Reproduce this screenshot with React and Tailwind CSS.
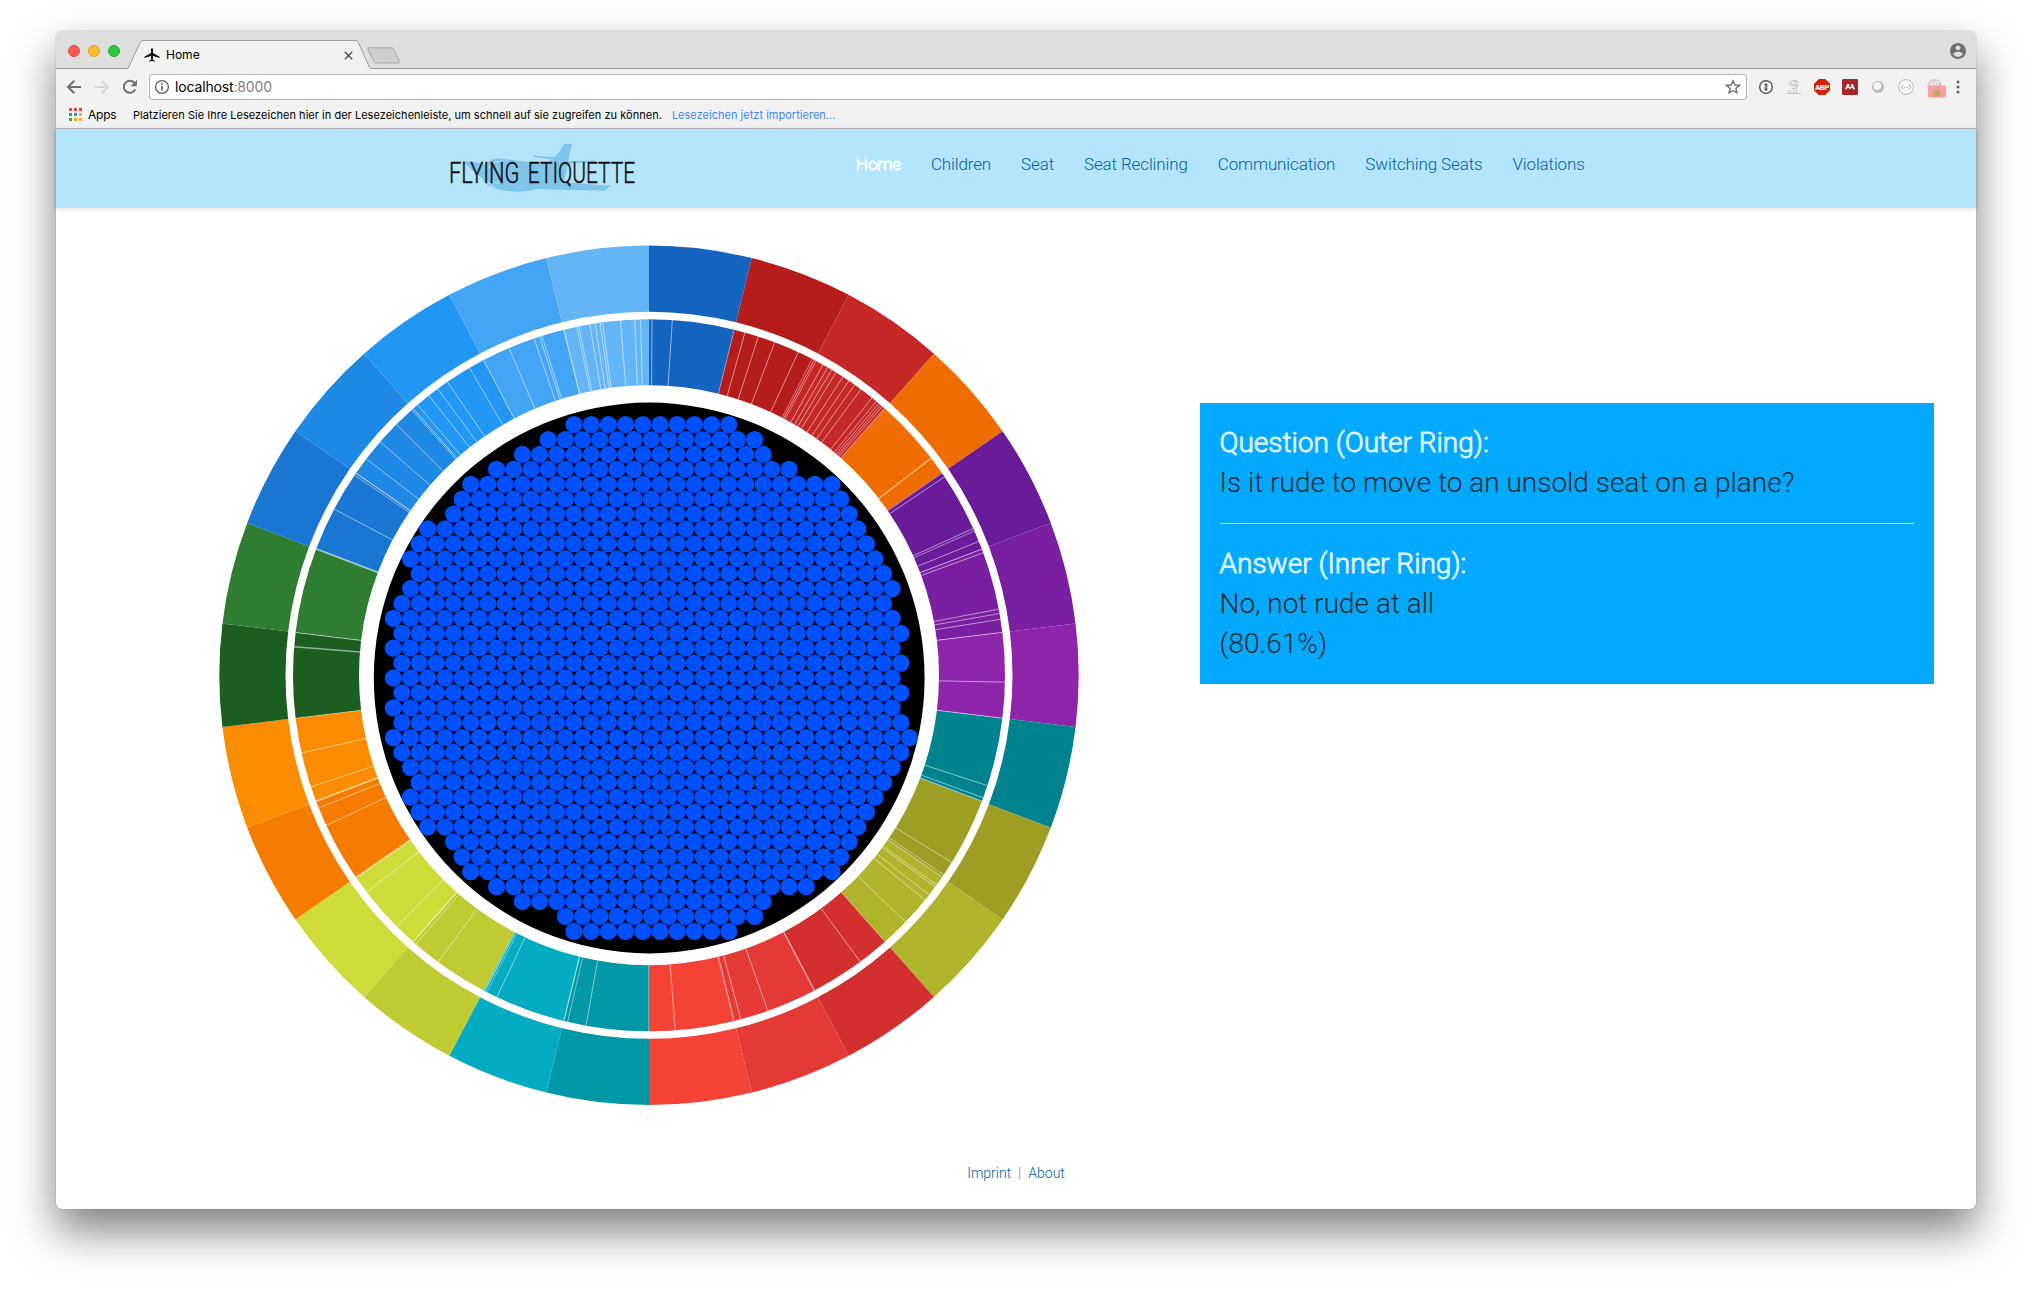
const CX = 649;
const CY = 675.3;

const RING_COLORS = [
  "#1565C0", "#B71C1C", "#C62828", "#EF6C00", "#6A1B9A", "#7B1FA2", "#8E24AA",
  "#00838F", "#9E9D24", "#AFB42B", "#D32F2F", "#E53935", "#F44336", "#0097A7",
  "#03ACC1", "#C0CA33", "#CDDC39", "#F57C00", "#FB8C00", "#1B5E20", "#2E7D32",
  "#1976D2", "#1E88E5", "#2196F3", "#42A5F5", "#64B5F6",
];

const STEP = 360 / RING_COLORS.length;

/* Answer boundaries on the inner ring: [angle, line width] */
const SPLITS = [
  [0.5, 1], [3.76, 1], [13.85, 0.6], [15.64, 1], [17.9, 1], [20.68, 1], [24.8, 1],
  [27.3, 0.8], [27.65, 0.8], [28, 0.8], [29.26, 1], [30.13, 1], [30.88, 1], [31.69, 1],
  [33.02, 1], [34.18, 1], [35.3, 1], [36.55, 1], [38.8, 1], [39.7, 0.9], [40.2, 0.9],
  [40.6, 0.9], [40.95, 0.9], [41.4, 0.9], [52.42, 1.4], [55.45, 0.5], [56.12, 1],
  [65.65, 1], [66.08, 0.9], [67.9, 1], [69.25, 1], [69.87, 1], [79.3, 1], [80, 1],
  [80.95, 1], [83.07, 1], [91.1, 1], [96.92, 1], [108.05, 1], [110.13, 1], [110.7, 0.9],
  [121.72, 1], [124.1, 0.9], [124.5, 0.9], [126.1, 1], [126.5, 1], [128.1, 1],
  [129.15, 1], [133.87, 1], [138.46, 0.6], [143.58, 1], [152.31, 1.3], [160.5, 1],
  [165.07, 1], [166.17, 1.1], [175.8, 1], [180.05, 0.8], [190.2, 1], [193.22, 0.9],
  [193.85, 1.3], [205.3, 1], [207.1, 0.8], [207.5, 1.3], [216.35, 1], [220.93, 0.9],
  [221.5, 1.3], [225.1, 1], [232.5, 1], [235.4, 1.5], [245.07, 1], [248.1, 1],
  [249.3, 1.6], [251.74, 1], [257.4, 1], [263.08, 0.8], [274.6, 1.4], [276.9, 1],
  [290.8, 1.8], [297.83, 1], [304.2, 1], [304.6, 1.2], [307.43, 1], [310.97, 1],
  [314.8, 1], [318.2, 1], [318.5, 1], [319.45, 1], [321.8, 1], [323.58, 1], [325.5, 1],
  [329.72, 1], [332.3, 1], [336.84, 1], [341.17, 1], [342.1, 1], [342.48, 1],
  [346.15, 1.2], [348.3, 0.9], [348.65, 0.9], [350.43, 1], [351.3, 1], [352.1, 1],
  [352.5, 1], [355.4, 1], [357.7, 1], [358.65, 1],
];

/* First and last half-column of every row of the seat dots */
const DOT_ROWS = [
  [0, 18], [-3, 21], [-6, 22], [-9, 25], [-12, 30], [-13, 31], [-14, 32], [-17, 33],
  [-18, 34], [-19, 35], [-18, 36], [-19, 37], [-20, 36], [-21, 37], [-20, 38],
  [-21, 37], [-20, 38], [-21, 37], [-20, 38], [-21, 37], [-20, 38], [-21, 39],
  [-20, 38], [-19, 37], [-18, 36], [-19, 35], [-18, 34], [-17, 33], [-14, 32],
  [-13, 31], [-12, 30], [-9, 27], [-6, 22], [-1, 21], [0, 18],
];

function polar(r, deg) {
  const a = (deg * Math.PI) / 180;
  return [CX + r * Math.sin(a), CY - r * Math.cos(a)];
}

function sector(r0, r1, a0, a1) {
  const [x0, y0] = polar(r1, a0);
  const [x1, y1] = polar(r1, a1);
  const [x2, y2] = polar(r0, a1);
  const [x3, y3] = polar(r0, a0);
  return `M${x0} ${y0}A${r1} ${r1} 0 0 1 ${x1} ${y1}L${x2} ${y2}A${r0} ${r0} 0 0 0 ${x3} ${y3}Z`;
}

function Chart() {
  const dots = [];
  DOT_ROWS.forEach(([from, to], row) => {
    for (let k = from; k <= to; k += 2) {
      dots.push(<circle key={`${row}-${k}`} cx={574 + 8.6 * k} cy={424.7 + 14.9 * row} r="8.65" />);
    }
  });
  return (
    <svg className="block h-[862px] w-[862px] shrink-0" viewBox="218 245 862 862">
      {RING_COLORS.map((c, i) => (
        <g key={c} fill={c}>
          <path d={sector(363.5, 429.7, i * STEP, (i + 1) * STEP)} />
          <path d={sector(290, 356, i * STEP, (i + 1) * STEP)} />
        </g>
      ))}
      <g stroke="#fff" strokeOpacity="0.52">
        {SPLITS.map(([a, w]) => {
          const [x1, y1] = polar(290, a);
          const [x2, y2] = polar(356, a);
          return <line key={a} x1={x1} y1={y1} x2={x2} y2={y2} strokeWidth={w} />;
        })}
      </g>
      <circle cx="649.2" cy="678" r="275.4" fill="#000" />
      <g fill="#0050ff">{dots}</g>
    </svg>
  );
}

function Logo() {
  return (
    <svg className="ml-[384px] h-[79px] w-[210px] shrink-0" viewBox="-10 0 210 79">
      <g fill="#7fc4ea">
        <path d="M11.5 32 25 33 34 36 39 32.5C43 29.5 48 29 53 30L96 35 106 27 114.5 15H122L118 32 145 31.500 144 33 118 34.500 114 53 155 56.500 161.500 56 155 61.500 120 61 86 60C78 63 66 64 52 61 42 59 34 55 33 50L27 45Z" />
        <path d="M83.5 26.5 107 28.5 106 31 84 28Z" />
      </g>
      <path d="M39 39c3-5 8-7 14-7M43 48c-1 3 0 5 3 6s5-2 3-4M36 50c2 4 5 7 9 8" fill="none" stroke="#b3e5fc" strokeWidth="1.1" />
      <g fill="#111" stroke="#111" strokeWidth="0.5" fontFamily="Roboto, sans-serif" fontSize="29.5" fontWeight="300">
        <text transform="translate(-1 54.2) scale(0.74 1)">FLYING</text>
        <text transform="translate(77.800 54.2) scale(0.71 1)">ETIQUETTE</text>
      </g>
    </svg>
  );
}

function TitleBar() {
  return (
    <div className="flex h-[38px] shrink-0 items-stretch rounded-t-[6px] bg-[#dedede]">
      <div className="flex w-[71px] shrink-0 items-center gap-2 border-b border-[#9a9a9a] pl-3 pt-[3px]">
        <span className="size-3 shrink-0 rounded-full border border-[#e14942] bg-[#fc5b57]" />
        <span className="size-3 shrink-0 rounded-full border border-[#dfa023] bg-[#fdbc2e]" />
        <span className="size-3 shrink-0 rounded-full border border-[#1dad2b] bg-[#28c940]" />
      </div>
      <div className="relative h-[38px] w-[245px] shrink-0">
        <svg className="absolute inset-0" width="245" height="38" viewBox="0 0 245 38">
          <path d="M0 38 1.5 37 13.5 10.8Q14 9.5 15.5 9.5H229Q230.5 9.5 231 10.8L242.5 36.5 245 38Z" fill="#f2f2f2" />
          <path d="M0 37.5Q1 37.5 1.5 36.5L13.5 10.8Q14 9.5 15.5 9.5H229Q230.5 9.5 231 10.8L242.5 36.5Q243 37.5 245 37.5" fill="none" stroke="#999" />
        </svg>
        <div className="relative flex h-full items-center pl-[17px] pt-[10px]">
          <svg width="16" height="16" viewBox="0 0 16 16" fill="#111">
            <path d="M8 1c.8 0 1 1 1 2v3L15.600 9.800v1.100L9 8.900 8.800 12.500 10.800 13.700v.8L8 14l-2.800.5v-.8l2-1.200L7 8.900.4 10.900V9.800L7 6V3c0-1 .2-2 1-2Z" />
          </svg>
          <span className="ml-[6px] font-[Inter,sans-serif] text-xs leading-4 text-black">Home</span>
          <svg className="ml-auto mr-[19px]" width="9" height="9" viewBox="0 0 9 9">
            <path d="M.8.8l7.400 7.400M8.200.8.8 8.200" stroke="#555" strokeWidth="1.500" />
          </svg>
        </div>
      </div>
      <div className="flex flex-1 items-center justify-between border-b border-[#9a9a9a] pr-[10px]">
        <svg className="-ml-[5px] mt-[12px]" width="34" height="17" viewBox="0 0 34 17">
          <path d="M2 .8H24.500Q26 .8 26.700 2L32.500 14.500Q33 16 31.500 16H9.500Q8 16 7.300 14.800L.8 2.200Q.3.8 2 .8Z" fill="#cfcfcf" stroke="#a5a5a5" />
        </svg>
        <svg className="mt-[3px]" width="16" height="16" viewBox="2 2 20 20" fill="#6b7075">
          <path d="M12 2C6.480 2 2 6.480 2 12s4.480 10 10 10 10-4.480 10-10S17.520 2 12 2zm0 3c1.660 0 3 1.340 3 3s-1.340 3-3 3-3-1.340-3-3 1.340-3 3-3zm0 14.200c-2.500 0-4.710-1.280-6-3.220.03-1.990 4-3.080 6-3.080 1.990 0 5.970 1.090 6 3.080-1.290 1.940-3.500 3.220-6 3.220z" />
        </svg>
      </div>
    </div>
  );
}

function Extensions() {
  return (
    <div className="ml-[11px] flex items-center gap-3">
      <svg width="16" height="16" viewBox="0 0 16 16">
        <circle cx="8" cy="8" r="6.300" fill="#fff" stroke="#55585c" strokeWidth="1.500" />
        <rect x="6.600" y="4.300" width="2.800" height="7.400" rx=".8" fill="#55585c" />
        <path d="M8 6.500v3" stroke="#eee" strokeWidth=".8" />
      </svg>
      <svg width="16" height="16" viewBox="0 0 16 16" fill="none" stroke="#c5c5c5">
        <path d="M3 4.500Q8-.5 13 3.500M4 6.500q2-2 4 0t5-.5M6 9q2 1.500 5 0M9 2l2 7" strokeWidth="1.300" />
        <path d="M1.500 14.500 3.500 11l2 3.500M8 11v3.500M10.500 11v3.500h4M1 14.500h14" strokeWidth="1" />
      </svg>
      <svg width="16" height="16" viewBox="0 0 16 16">
        <path d="M4.800 0h6.400L16 4.800v6.400L11.200 16H4.800L0 11.200V4.800Z" fill="#d81e05" />
        <text x="8" y="10.800" textAnchor="middle" fill="#fff" stroke="#fff" strokeWidth=".2" fontFamily="Liberation Sans, sans-serif" fontWeight="700" fontSize="7" letterSpacing="-.3">ABP</text>
      </svg>
      <svg width="16" height="16" viewBox="0 0 16 16">
        <rect width="16" height="16" rx="1.500" fill="#ab2328" />
        <g fill="#fff">
          <circle cx="6" cy="6.300" r="1.200" />
          <circle cx="10" cy="6.300" r="1.200" />
          <path d="M3 10.300V9.100Q4.500 9 4.700 6.200L8 8.200l3.300-2Q11.500 9 13 9.100v1.200h-1.900l-.7-1.900L8 9.900 5.600 8.400l-.7 1.900Z" />
        </g>
      </svg>
      <svg width="16" height="16" viewBox="0 0 16 16">
        <circle cx="8" cy="8" r="6" fill="#b9b9b9" />
        <circle cx="7.300" cy="7" r="4" fill="#f4f4f4" />
      </svg>
      <svg width="16" height="16" viewBox="0 0 16 16">
        <circle cx="8" cy="8" r="7.400" fill="#fafafa" stroke="#b5b5b5" />
        <path d="M5.200 5.500Q4.200 5.500 4.200 7L3.300 8l.9 1q0 1.500 1 1.500M10.800 5.500q1 0 1 1.500l.9 1-.9 1q0 1.500-1 1.500" fill="none" stroke="#aaa" strokeWidth=".9" />
        <path d="M6.200 8.500h.8M7.700 8.500h.8M9.200 8.500h.8" stroke="#aaa" />
      </svg>
      <svg className="ml-px mt-[2px]" width="19" height="20" viewBox="0 0 19 20">
        <path d="M0 8.500Q1 1 7.500 1T15 8.500Z" fill="#cdcdcd" />
        <circle cx="5.300" cy="5.500" r="1.900" fill="#fff" />
        <circle cx="9.700" cy="5.500" r="1.900" fill="#fff" />
        <circle cx="5.500" cy="5.500" r=".8" fill="#999" />
        <circle cx="9.500" cy="5.500" r=".8" fill="#999" />
        <rect x="1" y="7.500" width="18" height="12" rx="1.500" fill="#ff9e9e" />
        <path d="M7.500 13.500v-1.800a2.300 2.300 0 0 1 4.600 0v1.800" fill="none" stroke="#b5b5a5" strokeWidth="1.200" />
        <rect x="6" y="13" width="7.500" height="5.500" rx=".5" fill="#bfa65a" />
      </svg>
    </div>
  );
}

function Toolbar() {
  return (
    <div className="flex h-[37px] shrink-0 items-center bg-[#f2f2f2] pb-[2px] pl-[10px]">
      <svg width="16" height="16" viewBox="0 0 16 16" fill="none" stroke="#6b7075" strokeWidth="2">
        <path d="M15 8H2.500M8.300 1.700 2 8l6.300 6.300" />
      </svg>
      <svg className="ml-3" width="16" height="16" viewBox="0 0 16 16" fill="none" stroke="#d4d5d6" strokeWidth="2">
        <path d="M1 8h12.500M7.700 1.700 14 8l-6.300 6.300" />
      </svg>
      <svg className="ml-3" width="16" height="16" viewBox="0 0 16 16">
        <path d="M13.300 10.300A6 6 0 1 1 12.200 3.700L13.500 5" fill="none" stroke="#6b7075" strokeWidth="2" />
        <path d="M14.900.8v6.400H8.500Z" fill="#6b7075" />
      </svg>
      <div className="ml-[11px] flex h-[26px] w-[1598px] items-center rounded-[3px] border border-[#b5b5b5] bg-white pl-[4px] pr-[5px]">
        <svg width="16" height="16" viewBox="0 0 16 16">
          <circle cx="8" cy="8" r="6.400" fill="none" stroke="#5a5d61" strokeWidth="1.300" />
          <path d="M8 7v4.500M8 4.300v1.600" stroke="#5a5d61" strokeWidth="1.600" />
        </svg>
        <span className="ml-[5px] font-[Inter,sans-serif] text-sm tracking-[-0.15px] text-black">
          localhost<span className="text-[#808080]">:8000</span>
        </span>
        <svg className="ml-auto" width="16" height="16" viewBox="0 0 16 16" fill="none" stroke="#6b7075" strokeWidth="1.400">
          <path d="M8 1.800 9.800 6l4.600.4-3.500 3 1 4.500L8 11.500l-3.900 2.400 1-4.500-3.500-3L6.200 6Z" />
        </svg>
      </div>
      <Extensions />
      <svg className="ml-[9px]" width="6" height="14" viewBox="0 0 6 14" fill="#5f6368">
        <circle cx="3" cy="2" r="1.500" />
        <circle cx="3" cy="7" r="1.500" />
        <circle cx="3" cy="12" r="1.500" />
      </svg>
    </div>
  );
}

const APP_DOTS = [
  "bg-[#f44336]", "bg-[#f44336]", "bg-[#f44336]",
  "bg-[#34a853]", "bg-[#2b8cf4]", "bg-[#fbb30a]",
  "bg-[#34a853]", "bg-[#fbb30a]", "bg-[#fbb30a]",
];

function Bookmarks() {
  return (
    <div className="flex h-[23px] shrink-0 items-center border-b border-[#b0b0b0] bg-[#f2f2f2] pb-[5px] pl-[13px] font-[Inter,sans-serif] text-[11px] leading-4">
      <div className="grid grid-cols-3 gap-[2px]">
        {APP_DOTS.map((c, i) => (
          <span key={i} className={`size-[3px] ${c}`} />
        ))}
      </div>
      <span className="ml-[6px] text-[12px] tracking-[-0.2px] text-black">Apps</span>
      <span className="ml-[16.5px] whitespace-nowrap tracking-[0.028px] text-black">
        Platzieren Sie Ihre Lesezeichen hier in der Lesezeichenleiste, um schnell auf sie zugreifen zu können.
      </span>
      <span className="ml-[10px] whitespace-nowrap tracking-[0.02px] text-[#4285f4]">Lesezeichen jetzt importieren...</span>
    </div>
  );
}

const LINKS = ["Children", "Seat", "Seat Reclining", "Communication", "Switching Seats", "Violations"];

export default function App() {
  return (
    <div className="h-[1289px] w-[2032px] overflow-hidden bg-white pl-[56px] pt-[31px]">
      <div className="flex h-[1178px] w-[1920px] flex-col rounded-[6px] bg-white font-[Roboto,sans-serif] shadow-[0_0_1px_rgba(0,0,0,0.5),0_22px_44px_rgba(0,0,0,0.5)]">
        <TitleBar />
        <Toolbar />
        <Bookmarks />
        <header className="flex h-[79px] shrink-0 bg-[#b3e5fc] shadow-[0_1px_5px_rgba(0,0,0,0.15)]">
          <Logo />
          <nav className="ml-[206px] flex gap-[30px] pt-[23px] text-[17px] font-light leading-6 tracking-[-0.13px] text-[#0560ad]">
            <a className="text-white [-webkit-text-stroke:0.8px_#fff]">Home</a>
            {LINKS.map((l) => (
              <a key={l} className="whitespace-nowrap">{l}</a>
            ))}
          </nav>
        </header>
        <main className="flex items-start pl-[162px] pt-[37px]">
          <Chart />
          <section className="ml-[120px] mt-[158px] h-[281px] w-[734px] bg-[#03a9ff] pl-[19.5px] pr-5 pt-5 text-[28px] font-light leading-10 text-[#2b2b2b]">
            <h2 className="text-[#e1f5fe] [-webkit-text-stroke:0.8px_#e1f5fe]">Question (Outer Ring):</h2>
            <p>Is it rude to move to an unsold seat on a plane?</p>
            <hr className="my-5 border-t border-[#e1f5fe]" />
            <h2 className="text-[#e1f5fe] [-webkit-text-stroke:0.8px_#e1f5fe]">Answer (Inner Ring):</h2>
            <p>No, not rude at all</p>
            <p>(80.61%)</p>
          </section>
        </main>
        <footer className="mt-[56px] flex justify-center gap-[7px] text-sm font-light leading-5 text-[#0560ad]">
          <a>Imprint</a>
          <span className="text-[#c8642c]">|</span>
          <a>About</a>
        </footer>
      </div>
    </div>
  );
}
